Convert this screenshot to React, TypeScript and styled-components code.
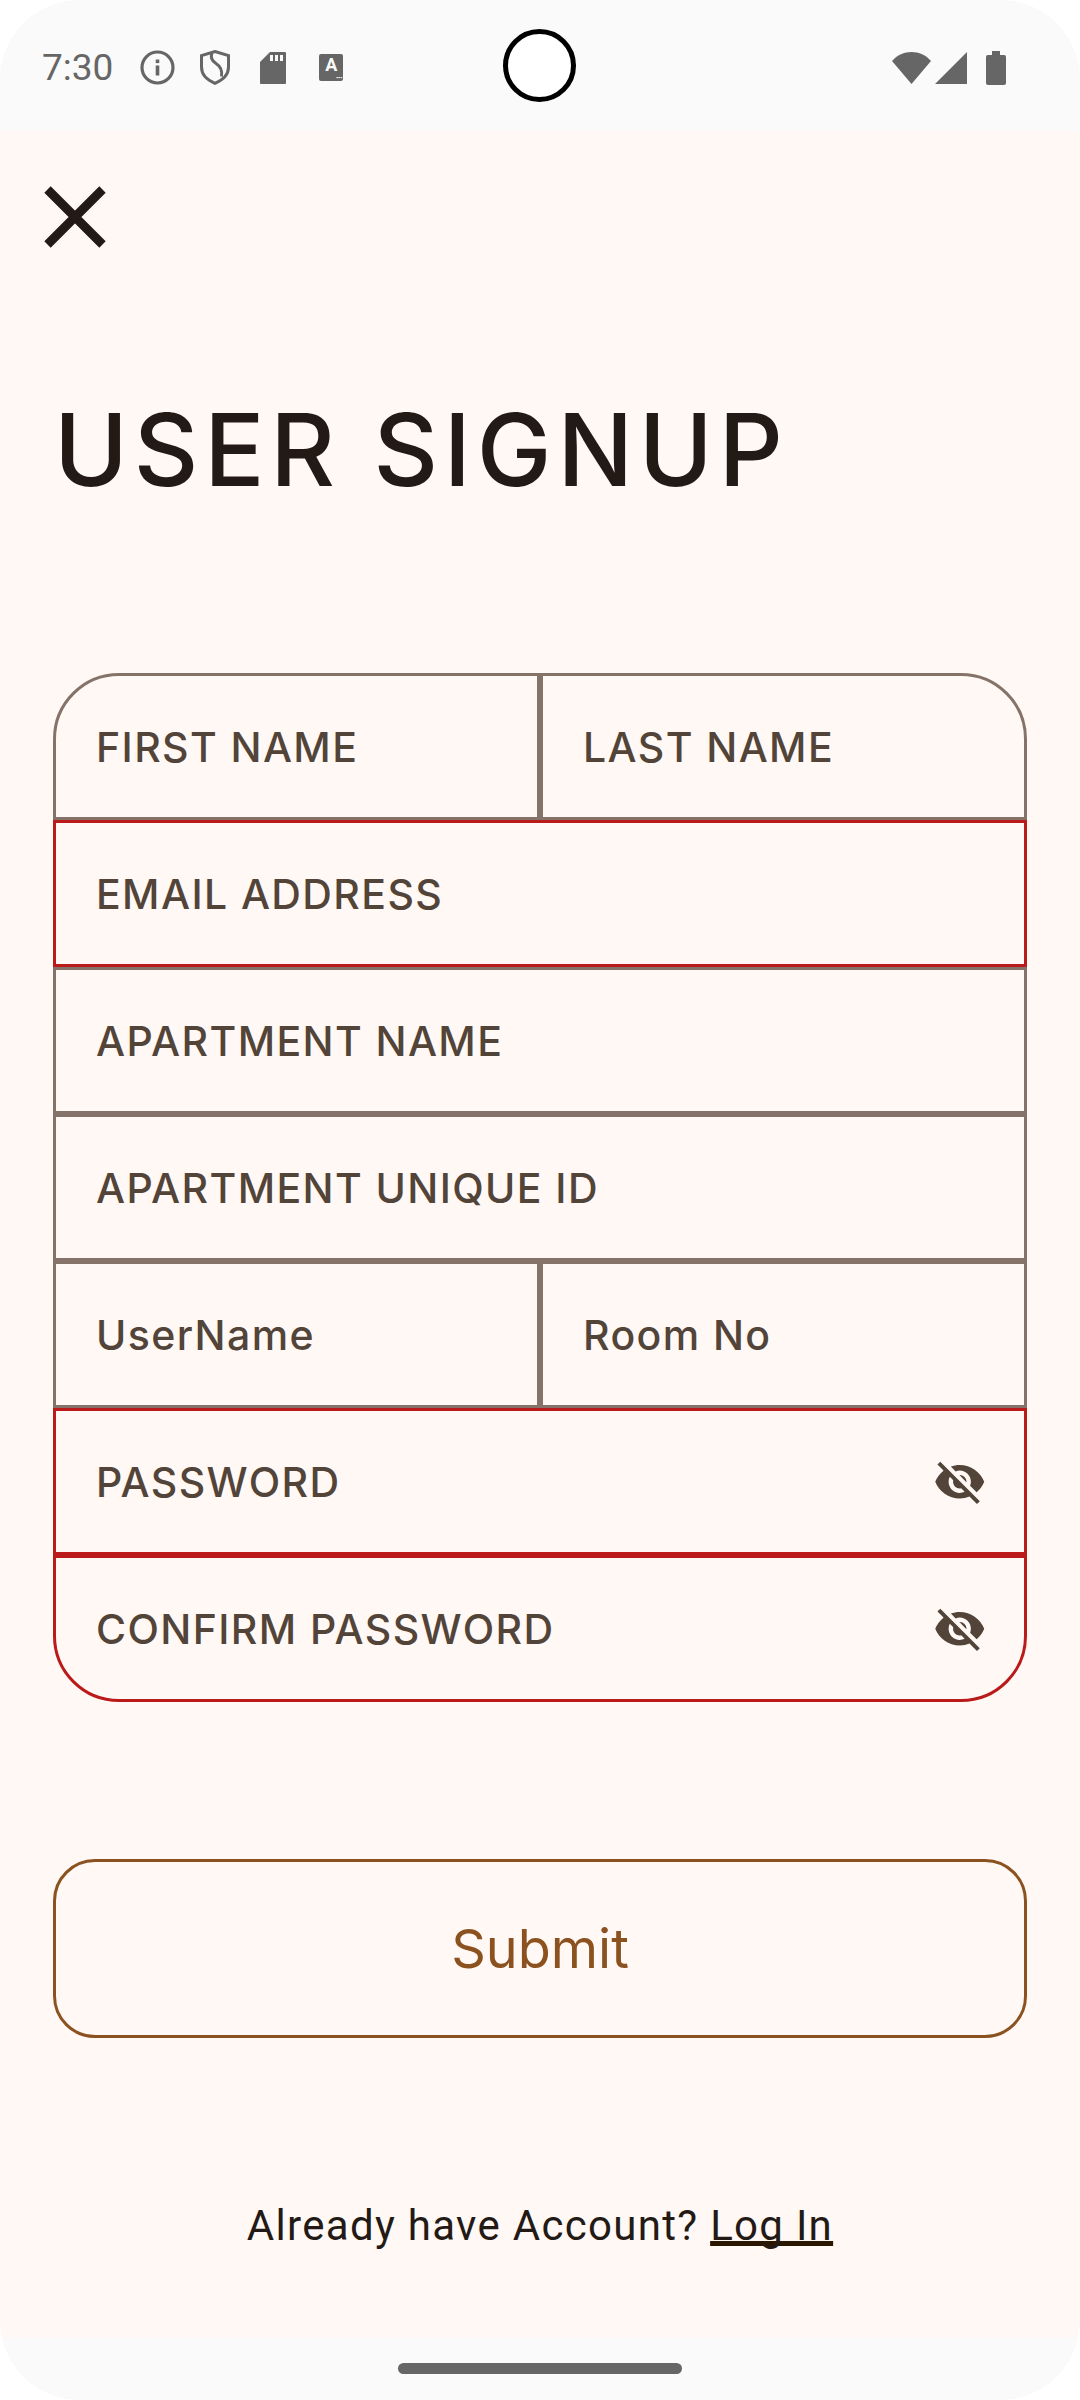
import React from 'react';
import styled, { createGlobalStyle } from 'styled-components';
import { MdVisibilityOff } from 'react-icons/md';

const GlobalStyle = createGlobalStyle`
  html, body { margin: 0; padding: 0; background: #fff; }
  body { font-family: "Inter", "Liberation Sans", sans-serif; }
`;

const fields = [
  { label: 'FIRST NAME', half: true, first: true },
  { label: 'LAST NAME', half: true, last: true },
  { label: 'EMAIL ADDRESS', error: true },
  { label: 'APARTMENT NAME' },
  { label: 'APARTMENT UNIQUE ID' },
  { label: 'UserName', half: true },
  { label: 'Room No', half: true },
  { label: 'PASSWORD', error: true, secret: true },
  { label: 'CONFIRM PASSWORD', error: true, secret: true, bottom: true },
];

export default function App() {
  return (
    <Screen>
      <GlobalStyle />
      <StatusBar>
        <StatusLeft>
          <Time>7:30</Time>
          <StatusIcon $gap={27} width="35" height="35" viewBox="0 0 35 35" fill="none">
            <circle cx="17.5" cy="17.5" r="15.5" stroke="#666" strokeWidth="3.2" />
            <rect x="15.7" y="15.5" width="3.6" height="10" fill="#666" />
            <rect x="15.7" y="9.5" width="3.6" height="3.6" fill="#666" />
          </StatusIcon>
          <StatusIcon $gap={25} width="30" height="35" viewBox="0 0 30 35" fill="none">
            <path d="M15 1.5 28.5 5.5v11.5c0 7.5-5.5 13-13.500 16.300C7 30 1.500 24.500 1.500 17V5.500z" stroke="#666" strokeWidth="3" />
            <path d="M12 3c-2 5 0 8 4 10.500s6.500 6.500 5.500 13" stroke="#666" strokeWidth="3" />
          </StatusIcon>
          <StatusIcon $gap={30} width="26" height="32" viewBox="0 0 26 32">
            <path d="M10 0h15a1 1 0 0 1 1 1v30a1 1 0 0 1-1 1H1a1 1 0 0 1-1-1V10z" fill="#666" />
            <rect x="10" y="3" width="3" height="6" fill="#fafafa" />
            <rect x="15" y="3" width="3" height="6" fill="#fafafa" />
            <rect x="20" y="3" width="3" height="6" fill="#fafafa" />
          </StatusIcon>
          <KeyboardBadge>A<small>•••</small></KeyboardBadge>
        </StatusLeft>
        <Camera />
        <StatusRight>
          <svg width="39" height="32" viewBox="0 0 39 32">
            <path d="M0 9C10-3 29-3 39 9L19.500 32z" fill="#666" />
          </svg>
          <StatusIcon $gap={4} width="32" height="32" viewBox="0 0 32 32">
            <path d="M32 0v32H0z" fill="#666" />
          </StatusIcon>
          <StatusIcon $gap={19} width="20" height="34" viewBox="0 0 20 34">
            <path d="M6 0h8v4h4a2 2 0 0 1 2 2v26a2 2 0 0 1-2 2H2a2 2 0 0 1-2-2V6a2 2 0 0 1 2-2h4z" fill="#666" />
          </StatusIcon>
        </StatusRight>
      </StatusBar>
      <Content>
        <CloseButton>
          <svg width="62" height="62" viewBox="0 0 62 62">
            <path d="M3.500 3.500 58.500 58.500M58.500 3.500 3.500 58.500" stroke="#231a15" strokeWidth="9" fill="none" />
          </svg>
        </CloseButton>
        <Title>USER SIGNUP</Title>
        <Form>
          {fields.map((f) => (
            <Field
              key={f.label}
              $half={f.half}
              $error={f.error}
              $first={f.first}
              $last={f.last}
              $bottom={f.bottom}
            >
              <FieldLabel>{f.label}</FieldLabel>
              {f.secret && <MdVisibilityOff size={53.5} color="#524439" />}
            </Field>
          ))}
        </Form>
        <SubmitButton>Submit</SubmitButton>
        <Footer>
          Already have Account? <LogIn>Log In</LogIn>
        </Footer>
      </Content>
      <NavBar>
        <NavPill />
      </NavBar>
    </Screen>
  );
}

const Screen = styled.div`
  width: 1080px;
  height: 2400px;
  display: flex;
  flex-direction: column;
  background: #fff8f5;
  border-radius: 80px;
  overflow: hidden;
`;

const StatusBar = styled.div`
  height: 131px;
  flex: none;
  box-sizing: border-box;
  background: #fafafa;
  position: relative;
  display: flex;
  justify-content: space-between;
  align-items: center;
  padding: 4px 74px 0 42px;
`;

const StatusLeft = styled.div`
  display: flex;
  align-items: center;
`;

const StatusIcon = styled.svg<{ $gap: number }>`
  margin-left: ${(p) => p.$gap}px;
`;

const Time = styled.span`
  font-family: "Roboto", sans-serif;
  font-size: 37px;
  color: #666;
`;

const KeyboardBadge = styled.span`
  width: 24px;
  height: 27px;
  margin-left: 33px;
  background: #666;
  border-radius: 2px;
  color: #fafafa;
  font-family: "Roboto", sans-serif;
  font-size: 18px;
  font-weight: 700;
  line-height: 22px;
  text-align: center;
  position: relative;
  small {
    position: absolute;
    right: 1px;
    bottom: 0;
    font-size: 6px;
    line-height: 6px;
    letter-spacing: 0;
  }
`;

const Camera = styled.div`
  position: absolute;
  left: 503px;
  top: 29px;
  width: 73px;
  height: 73px;
  box-sizing: border-box;
  border: 5px solid #000;
  border-radius: 50%;
  background: #fff;
`;

const StatusRight = styled.div`
  display: flex;
  align-items: center;
`;

const Content = styled.div`
  flex: 1;
  display: flex;
  flex-direction: column;
  padding: 0 53px;
`;

const CloseButton = styled.div`
  margin: 55px 0 0 -9px;
  height: 62px;
`;

const Title = styled.h1`
  margin: 142px 0 0 1px;
  font-family: "Inter", sans-serif;
  font-weight: 500;
  font-size: 100px;
  line-height: 120px;
  letter-spacing: 5.8px;
  color: #231a15;
`;

const Form = styled.div`
  margin-top: 163px;
  display: grid;
  grid-template-columns: 1fr 1fr;
  width: 974px;
`;

const Field = styled.div<{ $half?: boolean; $error?: boolean; $first?: boolean; $last?: boolean; $bottom?: boolean }>`
  grid-column: ${(p) => (p.$half ? 'span 1' : 'span 2')};
  height: 147px;
  box-sizing: border-box;
  border: 3px solid ${(p) => (p.$error ? '#ba1a1a' : '#85736a')};
  border-radius: ${(p) =>
    p.$first ? '66px 0 0 0' : p.$last ? '0 66px 0 0' : p.$bottom ? '0 0 66px 66px' : '0'};
  padding: 0 37.5px 0 40px;
  display: flex;
  align-items: center;
  justify-content: space-between;
`;

const FieldLabel = styled.span`
  font-family: "Inter", sans-serif;
  font-size: 41px;
  font-weight: 500;
  letter-spacing: 1.4px;
  color: #524439;
`;

const SubmitButton = styled.button`
  margin-top: 157px;
  width: 974px;
  height: 179px;
  box-sizing: border-box;
  background: transparent;
  border: 3px solid #8b5220;
  border-radius: 42px;
  font-family: "Inter", sans-serif;
  font-size: 54px;
  font-weight: 400;
  color: #8b5220;
`;

const Footer = styled.div`
  margin-top: 163px;
  text-align: center;
  font-family: "Roboto", sans-serif;
  font-size: 42px;
  letter-spacing: 1.3px;
  color: #231a15;
`;

const LogIn = styled.span`
  text-decoration: underline #2b1700;
  text-decoration-thickness: 5px;
  text-decoration-skip-ink: none;
  text-underline-offset: 1px;
`;

const NavBar = styled.div`
  height: 63px;
  flex: none;
  background: #fafafa;
  display: flex;
  justify-content: center;
  padding-top: 26px;
  box-sizing: border-box;
`;

const NavPill = styled.div`
  width: 284px;
  height: 11px;
  border-radius: 6px;
  background: #666;
`;
